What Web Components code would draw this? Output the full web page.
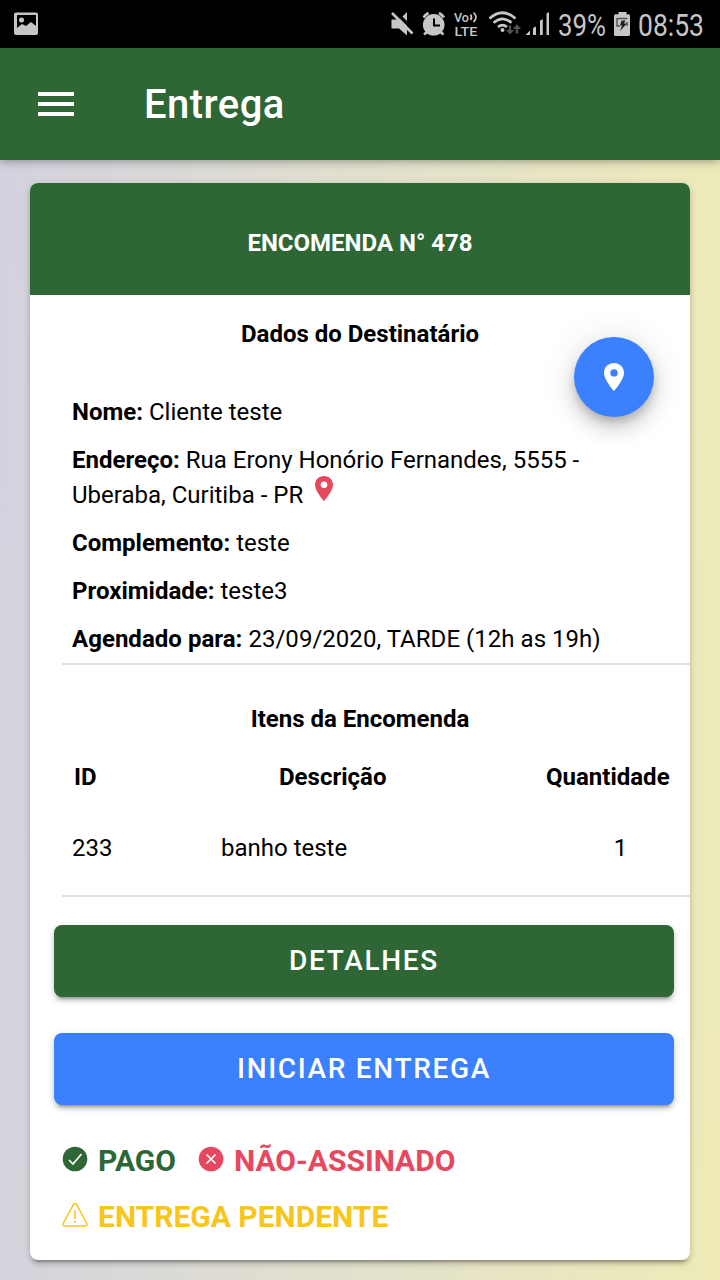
<!DOCTYPE html>
<html lang="pt-BR">
<head>
<meta charset="utf-8">
<title>Entrega</title>
<style>
html,body{margin:0;height:100%;overflow:hidden}
body{font-family:Roboto,"Liberation Sans",sans-serif;color:#000}
</style>
</head>
<body>
<delivery-app></delivery-app>
<script>
const define=(name,html)=>{
  const t=document.createElement('template');t.innerHTML=html;
  customElements.define(name,class extends HTMLElement{
    constructor(){super();this.attachShadow({mode:'open'}).append(t.content.cloneNode(true));}
  });
};

define('status-bar',`<style>
:host{display:flex;align-items:center;justify-content:space-between;height:48px;background:#000}
svg{display:block}
</style>
<svg width="60" height="48" viewBox="0 0 60 48"><path fill="#c6c6c6" fill-rule="evenodd" d="M16 12.500h20a2 2 0 0 1 2 2v18.500a2 2 0 0 1-2 2H16a2 2 0 0 1-2-2V14.500a2 2 0 0 1 2-2zM17 15v13l5-4 4 2 5-4 5 4V15z"/><circle cx="21.500" cy="20" r="2.500" fill="#c6c6c6"/></svg>
<svg width="340" height="48" viewBox="380 0 340 48" font-family="Roboto,sans-serif" fill="#c6c6c6">
 <path d="M391.500 19.500h8l7.500-7.500v23.500l-8-7h-7.500z"/><path d="M393.500 10 415.500 32" stroke="#000" stroke-width="3.400"/><path d="M392 13 412.500 33.500" stroke="#c6c6c6" stroke-width="2.600"/>
 <circle cx="433.700" cy="24.800" r="10.800"/><path d="M423.500 17.500a14 14 0 0 1 5-4.500M439 13a14 14 0 0 1 5 4.500M427 32l-3 2.500M440.500 32l3 2.500" stroke="#c6c6c6" stroke-width="2.600" fill="none"/><path d="M434 18.500v7h6" stroke="#000" stroke-width="2" fill="none"/>
 <text x="454" y="22" font-size="12.500" font-weight="500" textLength="15" lengthAdjust="spacingAndGlyphs">Vo</text>
 <path d="M470.500 14.500q2 2.800 0 5.600M473.500 12.500q5 4.800 0 9.600" stroke="#c6c6c6" stroke-width="1.700" fill="none"/>
 <text x="454.500" y="36" font-size="13" font-weight="500" textLength="23" lengthAdjust="spacingAndGlyphs">LTE</text>
 <g fill="none" stroke="#c6c6c6" stroke-width="2.700"><path d="M489.500 18.500q13-11.500 26 0M493.500 22.800q9-8 18 0M498 27q4.500-3.800 9 0"/></g><circle cx="502.500" cy="30" r="2"/>
 <path fill="#515151" d="M508.800 25.500h2.400v4.500h3l-4.200 4.500-4.200-4.500h3zM515.800 33.500h2.400V29h3l-4.200-4.800-4.200 4.800h3z"/>
 <path d="M525.500 35l4.500-4.500V35zM533 28l3-1.500V35h-3zM540 20.500l2.800-1.300V35H540zM546.500 13.500l2.500-1.500v23h-2.500z"/>
 <text x="558" y="35.500" font-size="31.500" textLength="48" lengthAdjust="spacingAndGlyphs">39%</text>
 <path d="M618.500 12h8v2.200h2a1.500 1.500 0 0 1 1.500 1.500v18.800a1.500 1.500 0 0 1-1.500 1.500h-13a1.500 1.500 0 0 1-1.500-1.500V15.700a1.500 1.500 0 0 1 1.500-1.500h3z"/><path d="M617 18.500h10.500M617 18v8h3M627 22v4" fill="none" stroke="#555" stroke-width="1.500"/><path fill="#222" d="M621.500 20.500h4l-1.500 3h3l-7 7.500 2-5.500h-2z"/>
 <text x="638" y="35.500" font-size="31.500" textLength="66" lengthAdjust="spacingAndGlyphs">08:53</text>
</svg>`);

define('app-toolbar',`<style>
:host{display:flex;align-items:center;height:112px;background:#2e6735;color:#fff;position:relative;box-shadow:0 2px 8px rgba(0,0,0,.3);box-sizing:border-box;padding-left:38px;gap:70px}
h1{margin:0;padding-top:2px;font-size:40px;font-weight:500;line-height:56px;letter-spacing:.45px}
.bars{display:flex;flex-direction:column;gap:6px;width:36px}
.bars i{height:4px;background:#fff}
</style><div class="bars"><i></i><i></i><i></i></div><h1><slot></slot></h1>`);

define('pin-icon',`<style>:host{display:inline-block;width:20px;height:28px}svg{display:block;width:100%;height:100%}</style>
<svg viewBox="0 0 20 28" preserveAspectRatio="none"><path fill="currentColor" fill-rule="evenodd" d="M10 0C4.400 0 0 4.300 0 9.700 0 17 10 28 10 28s10-11 10-18.300C20 4.300 15.600 0 10 0zm0 6.200a3.600 3.600 0 1 1 0 7.400 3.700 3.700 0 0 1 0-7.400z"/></svg>`);

define('map-fab',`<style>:host{display:flex;align-items:center;justify-content:center;width:80px;height:80px;border-radius:50%;background:#3a80ff;color:#fff;box-shadow:0 6px 10px -2px rgba(0,0,0,.2),0 12px 20px rgba(0,0,0,.14),0 2px 36px rgba(0,0,0,.12)}</style><pin-icon></pin-icon>`);

define('info-row',`<style>:host{display:block;font-size:24px;line-height:35px;padding-bottom:13px}b{font-weight:700}</style><b><slot name="label"></slot></b> <slot></slot>`);

define('section-title',`<style>:host{display:block;text-align:center;font-size:24px;line-height:36px;font-weight:700}</style><slot></slot>`);

define('items-table',`<style>
:host{display:block;font-size:24px;line-height:36px}
.r{display:grid;grid-template-columns:149px 1fr 156px;padding-left:42px}
.h{font-weight:700}.h span:first-child{padding-left:2px}.h span:nth-child(2){padding-left:58px}
.b{margin-top:35px}.b span:last-child{text-align:center;padding-left:17px}
.h span:last-child{padding-left:12px}
.r span{white-space:nowrap}
</style>
<div class="r h"><span>ID</span><span>Descrição</span><span>Quantidade</span></div>
<div class="r b"><span>233</span><span>banho teste</span><span>1</span></div>`);

define('action-button',`<style>
:host{display:block}
button{display:flex;align-items:center;justify-content:center;width:100%;height:72px;padding:0 0 1px;border:0;border-radius:8px;background:var(--bg);color:#fff;font:500 28px Roboto,sans-serif;letter-spacing:1.68px;box-shadow:0 6px 2px -4px rgba(0,0,0,.2),0 4px 4px rgba(0,0,0,.14),0 2px 10px rgba(0,0,0,.12)}
</style><button><slot></slot></button>`);

define('status-tag',`<style>
:host{display:flex;align-items:center;gap:10px;font-size:30px;line-height:56px;font-weight:700}
::slotted(svg){width:26px;height:26px;display:block;margin-bottom:5px}
</style><slot name="icon"></slot><span><slot></slot></span>`);

define('order-card',`<style>
:host{display:block;background:#fff;border-radius:8px;position:relative;height:1077px;box-shadow:0 6px 2px -4px rgba(0,0,0,.2),0 4px 4px rgba(0,0,0,.14),0 2px 10px rgba(0,0,0,.12)}
header{height:112px;box-sizing:border-box;padding-top:42px;background:#2e6735;border-radius:8px 8px 0 0;color:#fff;text-align:center;font-weight:700;font-size:24px;line-height:36px}
map-fab{position:absolute;right:36px;top:154px}
.first{margin-top:21px}
.rows{padding:43px 42px 0}
hr{border:0;height:2px;background:#e0e0e0;margin:0 0 0 32px}
.rows+hr{margin-top:-7px}
.second{margin-top:36px}
items-table{margin-top:22px}
items-table+hr{margin-top:29px}
.actions{display:flex;flex-direction:column;gap:36px;padding:28px 16px 0 24px}
.tags{padding:28px 32px 0;display:flex;flex-wrap:wrap;column-gap:22px}
.ok{color:#2e6735}.no{color:#e64860}.warn{color:#f8c51b}
.inpin{width:18px;height:25px;color:#e64860;margin-left:6px;vertical-align:2px;margin-top:-2px}
info-row{white-space:nowrap}
</style>
<header>ENCOMENDA N° 478</header>
<map-fab></map-fab>
<section-title class="first">Dados do Destinatário</section-title>
<div class="rows">
<info-row><span slot="label">Nome:</span>Cliente teste</info-row>
<info-row><span slot="label">Endereço:</span>Rua Erony Honório Fernandes, 5555 -<br>Uberaba, Curitiba - PR <pin-icon class="inpin"></pin-icon></info-row>
<info-row><span slot="label">Complemento:</span>teste</info-row>
<info-row><span slot="label">Proximidade:</span>teste3</info-row>
<info-row style="letter-spacing:.03px"><span slot="label">Agendado para:</span>23/09/2020, TARDE (12h as 19h)</info-row>
</div>
<hr>
<section-title class="second">Itens da Encomenda</section-title>
<items-table></items-table>
<hr>
<div class="actions"><action-button style="--bg:#2e6735">DETALHES</action-button><action-button style="--bg:#3a80ff">INICIAR ENTREGA</action-button></div>
<div class="tags">
<status-tag class="ok"><svg slot="icon" viewBox="0 0 26 26"><circle cx="13" cy="13" r="12.300" fill="currentColor"/><path d="M7 14l4 4 8.500-10" stroke="#fff" stroke-width="1.700" fill="none"/></svg>PAGO</status-tag>
<status-tag class="no"><svg slot="icon" viewBox="0 0 26 26"><circle cx="13" cy="13" r="12.300" fill="currentColor"/><path d="M8.500 8.500l9 9m0-9l-9 9" stroke="#fff" stroke-width="1.700" fill="none"/></svg>NÃO-ASSINADO</status-tag>
<status-tag class="warn"><svg slot="icon" viewBox="0 0 26 26"><path d="M11.500 2.300 1.200 21.500a1.700 1.700 0 0 0 1.500 2.500h20.600a1.700 1.700 0 0 0 1.500-2.500L14.500 2.300a1.700 1.700 0 0 0-3 0z" fill="none" stroke="currentColor" stroke-width="1.500"/><path d="M13 8.500v8.500" stroke="currentColor" stroke-width="1.600"/><circle cx="13" cy="19.800" r="1" fill="currentColor"/></svg>ENTREGA PENDENTE</status-tag>
</div>`);

define('delivery-app',`<style>
:host{display:flex;flex-direction:column;height:1280px;background:linear-gradient(92deg,#d3d1df 0%,#d6d4dc 9%,#e0dfcf 45%,#eae7bf 82%,#eeebb8 100%)}
main{padding:23px 30px 0}
</style><status-bar></status-bar><app-toolbar>Entrega</app-toolbar><main><order-card></order-card></main>`);
</script>
</body>
</html>
